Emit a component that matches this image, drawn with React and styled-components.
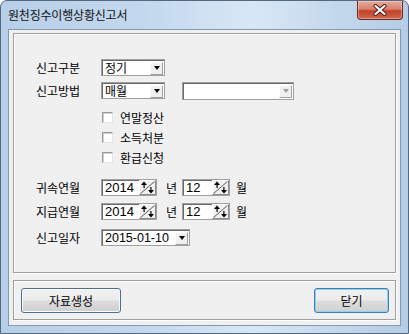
import * as React from 'react';
import styled, { createGlobalStyle } from 'styled-components';

const Global = createGlobalStyle`
  html, body {
    margin: 0;
    padding: 0;
    background: #ffffff;
  }
  body {
    font-family: "Noto Sans CJK KR", "Liberation Sans", sans-serif;
    font-size: 12px;
    color: #000;
  }
`;

const Window = styled.div`
  width: 409px;
  height: 334px;
  box-sizing: border-box;
  border: 1px solid #55687e;
  border-radius: 7px 7px 0 0;
  background: linear-gradient(90deg, #b7cfe8 0%, #c3d8ee 35%, #d8e7f5 62%, #c4d8ec 82%, #b4cce6 100%);
  display: flex;
  flex-direction: column;
  overflow: hidden;
`;

const TitleBar = styled.div`
  height: 28px;
  display: flex;
  align-items: flex-start;
  padding-left: 7px;
`;

const Title = styled.span`
  align-self: center;
  font-size: 12px;
  line-height: 14px;
  color: #111;
  letter-spacing: -0.2px;
`;

const CloseButton = styled.div`
  margin-left: auto;
  margin-right: 5px;
  width: 46px;
  height: 19px;
  box-sizing: border-box;
  border: 1px solid #6e2a20;
  border-top: none;
  border-radius: 0 0 4px 4px;
  background: linear-gradient(#e6a99b 0%, #d7826e 45%, #c2402a 55%, #cf6a4e 100%);
  box-shadow: inset 0 0 0 1px rgba(255, 255, 255, 0.35);
  display: flex;
  align-items: center;
  justify-content: center;
`;

const Client = styled.div`
  flex: 1;
  margin: 0 7px 7px 7px;
  border: 1px solid #8699ae;
  background: #f0f0f0;
  padding: 3px 4px 0 4px;
  display: flex;
  flex-direction: column;
  gap: 7px;
`;

const Panel = styled.div`
  box-sizing: border-box;
  height: ${p => p.$h}px;
  border: 1px solid #a0a0a0;
  box-shadow: inset 1px 1px 0 #ffffff, 1px 1px 0 #ffffff;
`;

const Form = styled.div`
  display: flex;
  flex-direction: column;
  padding: 25px 0 0 22px;
`;

const Row = styled.div`
  display: flex;
  align-items: center;
  height: 17px;
  margin-top: ${p => p.$mt || 0}px;
`;

const Label = styled.span`
  width: 65px;
  line-height: 14px;
`;

const Combo = styled.div`
  box-sizing: border-box;
  width: ${p => p.$w}px;
  height: ${p => p.$h || 17}px;
  margin-left: ${p => p.$ml || 0}px;
  background: #fff;
  border: 1px solid #a0a0a0;
  box-shadow: inset 1px 1px 0 #696969;
  display: flex;
  align-items: center;
  padding: 0 1px 0 3px;
`;

const ComboText = styled.span`
  flex: 1;
  line-height: 14px;
  font-family: ${p => (p.$num ? '"Liberation Sans", sans-serif' : 'inherit')};
  font-size: ${p => (p.$num ? 12.5 : 12)}px;
`;

const DropButton = styled.div`
  width: 13px;
  height: 13px;
  box-sizing: border-box;
  margin-top: 1px;
  background: #f0f0f0;
  border: 1px solid;
  border-color: #ffffff #a0a0a0 #a0a0a0 #ffffff;
  display: flex;
  align-items: center;
  justify-content: center;
`;

const Arrow = styled.div`
  width: 0;
  height: 0;
  border-left: 3.5px solid transparent;
  border-right: 3.5px solid transparent;
  border-top: 4px solid ${p => (p.$disabled ? '#a0a0a0' : '#000')};
`;

const Checks = styled.div`
  display: flex;
  flex-direction: column;
  margin-top: 8px;
  padding-left: 66px;
`;

const CheckRow = styled.label`
  display: flex;
  align-items: center;
  height: 20px;
  gap: 7px;
`;

const Box = styled.span`
  width: 11px;
  height: 11px;
  box-sizing: border-box;
  background: #fff;
  border: 1px solid;
  border-color: #9a9a9a #e3e3e3 #e3e3e3 #9a9a9a;
  box-shadow: inset 1px 1px 0 #d0d0d0;
`;

const Spin = styled.div`
  box-sizing: border-box;
  width: ${p => p.$w}px;
  height: 17px;
  background: #fff;
  border: 1px solid #a0a0a0;
  box-shadow: inset 1px 1px 0 #696969;
  display: flex;
  align-items: center;
  padding-left: 3px;
`;

const SpinText = styled.span`
  flex: 1;
  font-family: "Liberation Sans", sans-serif;
  font-size: 13px;
  line-height: 14px;
`;

const Unit = styled.span`
  width: ${p => p.$w}px;
  padding-left: ${p => p.$pl}px;
  box-sizing: border-box;
  line-height: 14px;
`;

const Footer = styled(Panel)`
  display: flex;
  align-items: center;
  justify-content: space-between;
  padding: 0 6px 0 7px;
`;

const Button = styled.button`
  box-sizing: border-box;
  width: ${p => p.$w}px;
  height: 25px;
  border-radius: 3px;
  border: 1px solid ${p => (p.$default ? '#3c7fb1' : '#4f6f92')};
  background: linear-gradient(#f2f2f2 0%, #ebebeb 48%, #dddddd 52%, #cfcfcf 100%);
  box-shadow: ${p => (p.$default ? 'inset 0 0 0 1px #8fd0f4' : 'inset 0 0 0 1px #fbfbfb')};
  font-family: "Noto Sans CJK KR", sans-serif;
  font-size: 12px;
  color: #000;
  padding: 0;
`;

const SpinButton = () => (
  <svg width="17" height="15" viewBox="0 0 17 15">
    <rect x="0" y="0" width="17" height="15" fill="#f0f0f0" />
    <path d="M0.5 14.5V0.5H16.5" stroke="#ffffff" fill="none" />
    <path d="M0.5 14.5H16.5V0.5" stroke="#8a8a8a" fill="none" />
    <path d="M1.5 13.5L15.5 1.5" stroke="#5a5a5a" />
    <path d="M5 1.5L2 5H8Z" fill="#000" />
    <rect x="4.5" y="4" width="1.2" height="4" fill="#000" />
    <rect x="11.3" y="7" width="1.2" height="4" fill="#000" />
    <path d="M12 13.5L9 10H15Z" fill="#000" />
  </svg>
);

const CloseGlyph = () => (
  <svg width="14" height="12" viewBox="0 0 14 12">
    <path d="M2.5 2L11.5 10M11.5 2L2.5 10" stroke="#4a1a14" strokeWidth="4" strokeLinecap="round" />
    <path d="M2.5 2L11.5 10M11.5 2L2.5 10" stroke="#ffffff" strokeWidth="2.2" strokeLinecap="round" />
  </svg>
);

const ComboBox = ({ w, h, ml, text, num, disabled }) => (
  <Combo $w={w} $h={h} $ml={ml}>
    <ComboText $num={num}>{text}</ComboText>
    <DropButton>
      <Arrow $disabled={disabled} />
    </DropButton>
  </Combo>
);

const Period = ({ label, mt }) => (
  <Row $mt={mt}>
    <Label>{label}</Label>
    <Spin $w={56}>
      <SpinText>2014</SpinText>
      <SpinButton />
    </Spin>
    <Unit $w={25} $pl={9}>년</Unit>
    <Spin $w={48}>
      <SpinText>12</SpinText>
      <SpinButton />
    </Spin>
    <Unit $w={20} $pl={6}>월</Unit>
  </Row>
);

export default function App() {
  return (
    <>
      <Global />
      <Window>
        <TitleBar>
          <Title>원천징수이행상황신고서</Title>
          <CloseButton>
            <CloseGlyph />
          </CloseButton>
        </TitleBar>
        <Client>
          <Panel $h={240}>
            <Form>
              <Row>
                <Label>신고구분</Label>
                <ComboBox w={64} text="정기" />
              </Row>
              <Row $mt={6}>
                <Label>신고방법</Label>
                <ComboBox w={64} text="매월" />
                <ComboBox w={112} h={18} ml={17} text="" disabled />
              </Row>
              <Checks>
                {['연말정산', '소득처분', '환급신청'].map(t => (
                  <CheckRow key={t}>
                    <Box />
                    {t}
                  </CheckRow>
                ))}
              </Checks>
              <Period label="귀속연월" mt={12} />
              <Period label="지급연월" mt={7} />
              <Row $mt={9}>
                <Label>신고일자</Label>
                <ComboBox w={89} text="2015-01-10" num />
              </Row>
            </Form>
          </Panel>
          <Footer $h={40}>
            <Button $w={100}>자료생성</Button>
            <Button $w={75} $default>닫기</Button>
          </Footer>
        </Client>
      </Window>
    </>
  );
}
